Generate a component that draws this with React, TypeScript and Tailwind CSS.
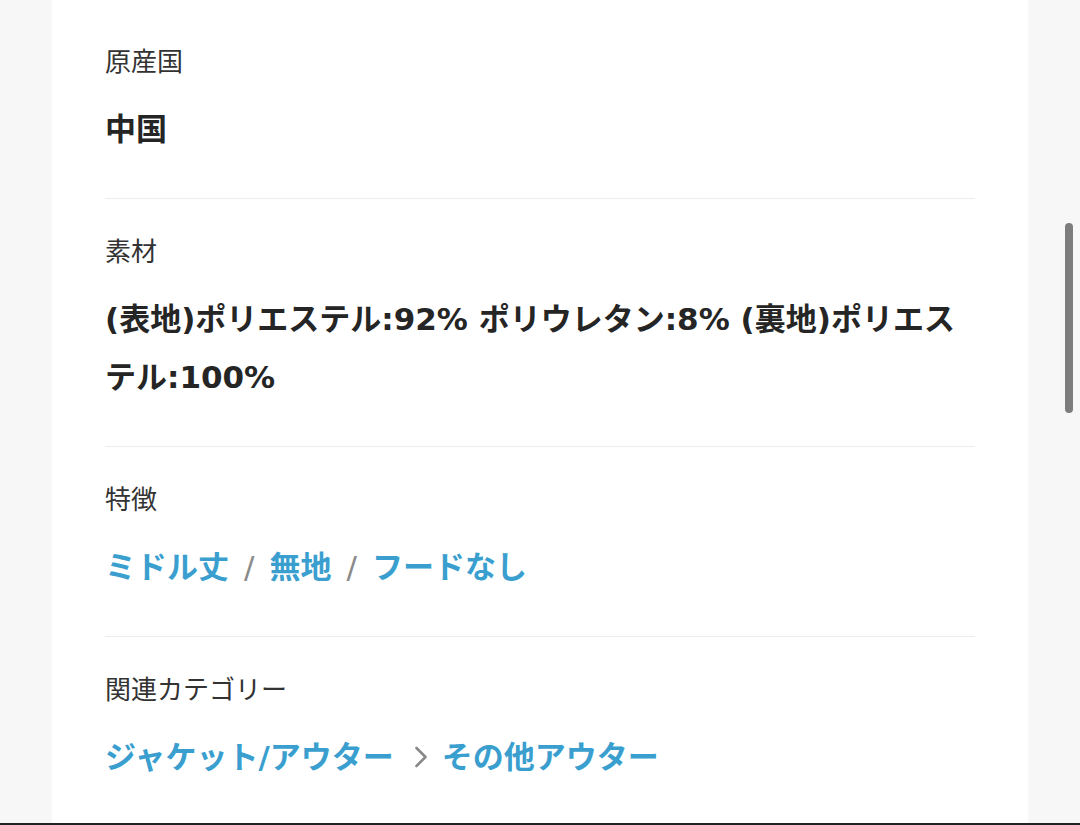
import React from 'react'

type Section = {
  label: string
  value?: string
  tags?: string[]
  path?: string[]
}

const sections: Section[] = [
  { label: '原産国', value: '中国' },
  { label: '素材', value: '(表地)ポリエステル:92% ポリウレタン:8% (裏地)ポリエステル:100%' },
  { label: '特徴', tags: ['ミドル丈', '無地', 'フードなし'] },
  { label: '関連カテゴリー', path: ['ジャケット/アウター', 'その他アウター'] },
]

function Chevron() {
  return (
    <svg width="14" height="24" viewBox="0 0 14 24" className="ml-[20px] mr-[14px] shrink-0">
      <polyline points="2.5,3 11.5,12 2.5,21" fill="none" stroke="#8a8a8a" strokeWidth="2.6" strokeLinecap="round" strokeLinejoin="round" />
    </svg>
  )
}

function DetailRow({ section, last }: { section: Section; last: boolean }) {
  return (
    <div className={`pt-[33px] pb-[40px] ${last ? '' : 'border-b border-[#ececec]'}`}>
      <div className="text-[26px] leading-[36px] text-[#333]">{section.label}</div>
      <div
        className="mt-[22px] text-[31px] leading-[58px] font-bold"
        style={{ fontFamily: '"DejaVu Sans", "Noto Sans CJK JP", sans-serif' }}
      >
        {section.value && <p className="text-[#252525]">{section.value}</p>}
        {section.tags && (
          <div className="flex items-center">
            {section.tags.map((t, i) => (
              <React.Fragment key={t}>
                {i > 0 && <span className="mx-[15px] font-normal text-[#8a8a8a]">/</span>}
                <span className="text-[#3a9fcf]">{t}</span>
              </React.Fragment>
            ))}
          </div>
        )}
        {section.path && (
          <div className="flex items-center">
            {section.path.map((p, i) => (
              <React.Fragment key={p}>
                {i > 0 && <Chevron />}
                <span className="text-[#3a9fcf]">{p}</span>
              </React.Fragment>
            ))}
          </div>
        )}
      </div>
    </div>
  )
}

export default function App() {
  return (
    <div
      className="relative h-[825px] flex flex-col bg-[#f7f7f7] overflow-hidden"
      style={{ fontFamily: '"Noto Sans CJK JP", "Noto Sans", sans-serif' }}
    >
      <div className="flex-1 min-h-0">
        <div className="ml-[52px] w-[976px] h-full bg-white px-[53px] pt-[9px]">
          {sections.map((s, i) => (
            <DetailRow key={s.label} section={s} last={i === sections.length - 1} />
          ))}
        </div>
      </div>
      <div className="h-[2px] bg-[#222]" />
      {/* scrollbar thumb */}
      <div className="absolute left-[1065px] top-[223px] w-[8px] h-[190px] rounded-full bg-[#7d7d7d]" />
    </div>
  )
}
